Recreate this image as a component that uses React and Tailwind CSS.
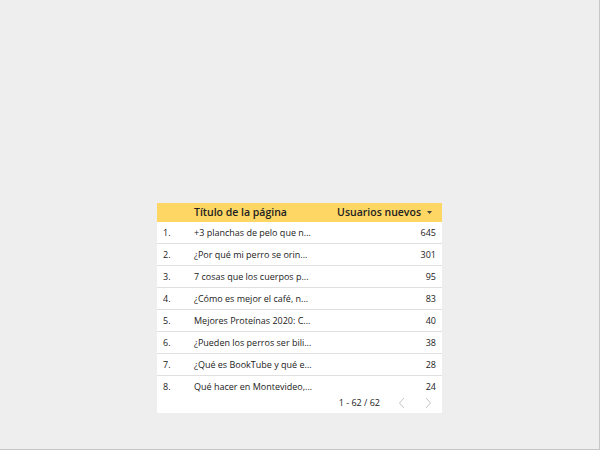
import React from 'react';

const rows = [
  ['+3 planchas de pelo que n...', 645],
  ['¿Por qué mi perro se orin...', 301],
  ['7 cosas que los cuerpos p...', 95],
  ['¿Cómo es mejor el café, n...', 83],
  ['Mejores Proteínas 2020: C...', 40],
  ['¿Pueden los perros ser bili...', 38],
  ['¿Qué es BookTube y qué e...', 28],
  ['Qué hacer en Montevideo,...', 24],
];

export default function App() {
  return (
    <div className="w-[600px] h-[450px] bg-[#eeeeee] border-r border-b border-[#c6c6c6] flex flex-col" style={{ fontFamily: '"Open Sans", sans-serif' }}>
      <div className="ml-[157px] mt-[203px] w-[285px] h-[210px] bg-white flex flex-col">
        <div className="h-[19px] bg-[#fdd663] flex items-center text-[10.5px] font-semibold text-[#222]">
          <div className="w-[37px]" />
          <div className="flex-1">Título de la página</div>
          <div className="pr-[10px] flex items-center gap-[6px]">
            Usuarios nuevos
            <svg width="5" height="3" viewBox="0 0 5 3"><path d="M0 0h5L2.5 3z" fill="#444" /></svg>
          </div>
        </div>
        {rows.map(([t, v], i) => (
          <div key={i} className={`h-[22px] flex items-center text-[9px] text-[#222] ${i < 7 ? 'border-b border-[#e0e0e0]' : ''}`}>
            <div className="w-[37px] pl-[6px]">{i + 1}.</div>
            <div className="w-[130px] whitespace-nowrap">{t}</div>
            <div className="flex-1 text-right pr-[6px]">{v}</div>
          </div>
        ))}
        <div className="flex items-center justify-end h-[10px] text-[9px] text-[#222]">
          <span className="mr-[18px]">1 - 62 / 62</span>
          <svg width="8" height="12" viewBox="0 0 8 12" className="mr-[18px]"><path d="M6 1L1.5 6L6 11" fill="none" stroke="#c4c4c4" strokeWidth="1" /></svg>
          <svg width="8" height="12" viewBox="0 0 8 12" className="mr-[10px]"><path d="M2 1L6.5 6L2 11" fill="none" stroke="#c4c4c4" strokeWidth="1" /></svg>
        </div>
      </div>
    </div>
  );
}
